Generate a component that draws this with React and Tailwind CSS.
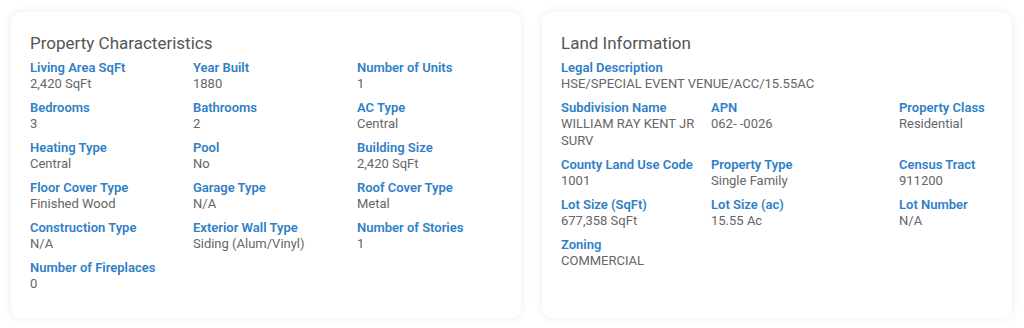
import React from "react";

const propertyFields = [
  { label: "Living Area SqFt", value: "2,420 SqFt" },
  { label: "Year Built", value: "1880" },
  { label: "Number of Units", value: "1" },
  { label: "Bedrooms", value: "3" },
  { label: "Bathrooms", value: "2" },
  { label: "AC Type", value: "Central" },
  { label: "Heating Type", value: "Central" },
  { label: "Pool", value: "No" },
  { label: "Building Size", value: "2,420 SqFt" },
  { label: "Floor Cover Type", value: "Finished Wood" },
  { label: "Garage Type", value: "N/A" },
  { label: "Roof Cover Type", value: "Metal" },
  { label: "Construction Type", value: "N/A" },
  { label: "Exterior Wall Type", value: "Siding (Alum/Vinyl)" },
  { label: "Number of Stories", value: "1" },
  { label: "Number of Fireplaces", value: "0" },
];

const landFields = [
  { label: "Subdivision Name", value: "WILLIAM RAY KENT JR SURV" },
  { label: "APN", value: "062- -0026" },
  { label: "Property Class", value: "Residential" },
  { label: "County Land Use Code", value: "1001" },
  { label: "Property Type", value: "Single Family" },
  { label: "Census Tract", value: "911200" },
  { label: "Lot Size (SqFt)", value: "677,358 SqFt" },
  { label: "Lot Size (ac)", value: "15.55 Ac" },
  { label: "Lot Number", value: "N/A" },
  { label: "Zoning", value: "COMMERCIAL" },
];

function Field({ label, value }) {
  return (
    <div className="leading-[17px]">
      <div className="text-[13px] font-semibold text-[#2f80c6]">{label}</div>
      <div className="text-[13px] leading-[16.5px] text-[#666666]">{value}</div>
    </div>
  );
}

function Card({ title, children }) {
  return (
    <div className="h-full rounded-[10px] bg-white px-[19px] pt-[20px] shadow-[0_0_10px_rgba(0,0,0,0.08)]">
      <h2 className="text-[17px] leading-[22px] text-[#555555] mb-[5px]">{title}</h2>
      {children}
    </div>
  );
}

export default function App() {
  return (
    <div
      className="flex h-[328px] w-[1024px] gap-[21px] bg-white px-[11px] pt-[12px] pb-[10px]"
      style={{ fontFamily: "Roboto, 'Noto Sans', sans-serif" }}
    >
      <div className="w-[510px]">
        <Card title="Property Characteristics">
          <div className="grid grid-cols-[163px_164px_1fr] gap-y-[6.5px]">
            {propertyFields.map((f, i) => (
              <Field key={i} {...f} />
            ))}
          </div>
        </Card>
      </div>
      <div className="w-[470px]">
        <Card title="Land Information">
          <div className="mb-[6.5px]">
            <Field label="Legal Description" value="HSE/SPECIAL EVENT VENUE/ACC/15.55AC" />
          </div>
          <div className="grid grid-cols-[150px_188px_1fr] gap-y-[6.5px]">
            {landFields.map((f, i) => (
              <Field key={i} {...f} />
            ))}
          </div>
        </Card>
      </div>
    </div>
  );
}
